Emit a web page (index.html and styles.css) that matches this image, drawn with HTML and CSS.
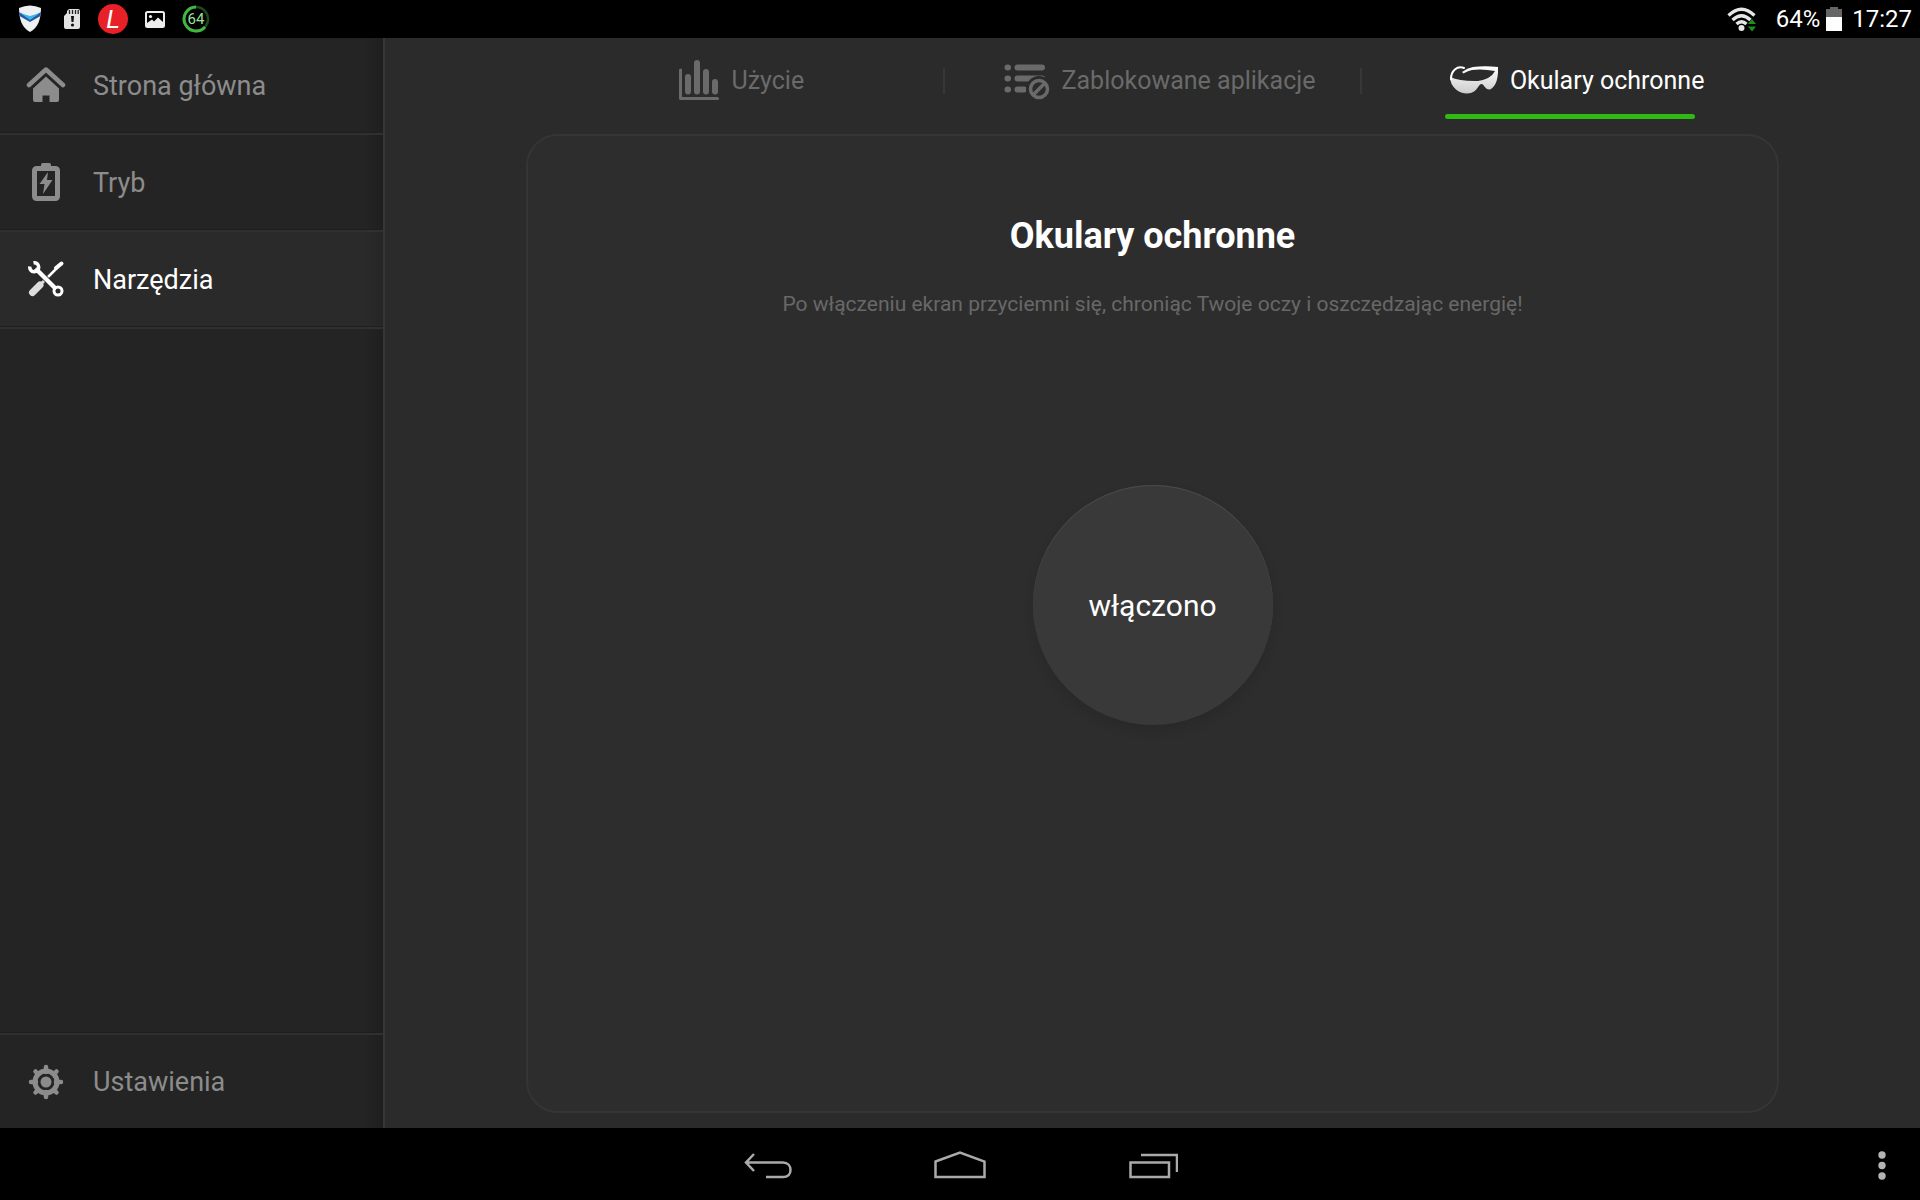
FILE: index.html
```html
<!DOCTYPE html>
<html lang="pl">
<head>
    <meta charset="UTF-8">
    <meta name="viewport" content="width=device-width, initial-scale=1.0">
    <title>Okulary ochronne</title>
    <link rel="stylesheet" href="styles.css">
</head>
<body>
    <header class="status-bar">
        <div class="status-icons">
            <svg width="24" height="28" viewBox="0 0 24 28" aria-hidden="true">
                <path d="M1 3Q12-2 23 3C23 14 20 23 12 27C4 23 1 14 1 3Z" fill="#eef0f2"/>
                <path d="M1 7L12 13L23 7L22.500 11L12 17L1.500 11Z" fill="#2458a0"/>
                <path d="M2 8L12 11L22 8L12 15Z" fill="#3cb4e8"/>
            </svg>
            <svg width="18" height="22" viewBox="0 0 18 22" aria-hidden="true">
                <path d="M6 1H15Q17 1 17 3V19Q17 21 15 21H3Q1 21 1 19V8L4 5V3Z" fill="#e2e2e2"/>
                <path d="M6.500 2V6M9.500 2V6M12.500 2V6M15.200 2V6" stroke="#222" stroke-width="1.300"/>
                <path d="M8 8H11L10.500 14H8.500Z" fill="#111"/>
                <circle cx="9.500" cy="17" r="1.600" fill="#111"/>
            </svg>
            <svg width="30" height="30" viewBox="0 0 30 30" aria-hidden="true">
                <circle cx="15" cy="15" r="15" fill="#e82027"/>
                <text class="logo-letter" x="15" y="24" text-anchor="middle">L</text>
            </svg>
            <svg width="20" height="17" viewBox="0 0 20 17" aria-hidden="true">
                <rect x="1" y="1" width="18" height="15" rx="1.500" fill="none" stroke="#ededed" stroke-width="2"/>
                <path d="M2 15V12L7 8.500L9 10.500L13 6.500L18 11V15Z" fill="#ededed"/>
                <circle cx="5.500" cy="5.500" r="1.600" fill="#ededed"/>
            </svg>
            <svg width="28" height="28" viewBox="0 0 28 28" aria-hidden="true">
                <circle cx="14" cy="14" r="12" fill="none" stroke="#1d4a1c" stroke-width="2.500"/>
                <path d="M14 2A12 12 0 1 0 23 22" fill="none" stroke="#43b83e" stroke-width="3"/>
                <text class="ring-text" x="14" y="19" text-anchor="middle">64</text>
            </svg>
        </div>
        <div class="status-info">
            <svg class="wifi" width="30" height="25" viewBox="0 0 30 25" aria-hidden="true">
                <g fill="none" stroke="#e6e6e6" stroke-width="3.300">
                    <path d="M1.500 8.500Q14.500-4 27.500 8.500"/>
                    <path d="M5.500 13Q14.500 4.500 23.500 13"/>
                    <path d="M9.500 17Q14.500 12.500 19.500 17"/>
                </g>
                <circle cx="14.500" cy="21" r="3" fill="#e6e6e6"/>
                <path d="M25 12L29 17H21ZM21 19.500H29L25 24.500Z" fill="#1f8f1c"/>
            </svg>
            <span>64%</span>
            <svg class="battery" width="16" height="24" viewBox="0 0 16 24" aria-hidden="true">
                <path d="M0 2H4V0H12V2H16V10H0Z" fill="#666"/>
                <path d="M0 10H16V24H0Z" fill="#fff"/>
            </svg>
            <span>17:27</span>
        </div>
    </header>

    <div class="app">
        <nav class="sidebar">
            <a class="side-item" href="#">
                <svg width="40" height="40" viewBox="0 2 40 40" aria-hidden="true">
                    <path d="M3 21L20 5.500L37 21" fill="none" stroke="currentColor" stroke-width="4.500" stroke-linecap="round" stroke-linejoin="round"/>
                    <path d="M20 12.500L33 24.500V36Q33 38 31 38H23.500V31.500H16.500V38H9Q7 38 7 36V24.500Z" fill="currentColor"/>
                </svg>
                Strona główna
            </a>
            <a class="side-item" href="#">
                <svg width="40" height="40" viewBox="0 1 40 40" aria-hidden="true">
                    <path d="M15 4V3Q15 1 17 1H23Q25 1 25 3V4Z" fill="currentColor"/>
                    <rect x="8.500" y="6.500" width="23" height="30" rx="2" fill="none" stroke="currentColor" stroke-width="5"/>
                    <path d="M22 10L13.500 22H18.500L17 32L26.500 18H21Z" fill="currentColor"/>
                </svg>
                Tryb
            </a>
            <a class="side-item active" href="#">
                <svg width="40" height="40" viewBox="0 1 40 40" aria-hidden="true">
                    <path d="M20 20L33 7" stroke="currentColor" stroke-width="2.500"/>
                    <path d="M30 9L35.500 4.500" stroke="currentColor" stroke-width="4" stroke-linecap="round"/>
                    <path d="M14 26L6.500 33.500" stroke="#ddd" stroke-width="7" stroke-linecap="round"/>
                    <path d="M20 20L13 27" stroke="#ddd" stroke-width="3"/>
                    <path d="M10 10L30 30" stroke="#2a2a2a" stroke-width="6"/>
                    <path d="M9.500 9.500L29 29" stroke="currentColor" stroke-width="4.500"/>
                    <path d="M7.500 3.800A4.500 4.500 0 1 1 3.800 7.500" fill="none" stroke="currentColor" stroke-width="3.500"/>
                    <circle cx="32" cy="32" r="4" fill="none" stroke="currentColor" stroke-width="3"/>
                </svg>
                Narzędzia
            </a>
            <a class="side-item settings" href="#">
                <svg width="40" height="40" viewBox="0 0 40 40" aria-hidden="true">
                    <circle cx="20" cy="20" r="11" fill="none" stroke="currentColor" stroke-width="5"/>
                    <path d="M20 5V10M20 30V35M5 20H10M30 20H35M9.500 9.500L12 12M28 28L30.500 30.500M9.500 30.500L12 28M28 12L30.500 9.500" stroke="currentColor" stroke-width="4.500" stroke-linecap="round"/>
                    <circle cx="20" cy="20" r="5.500" fill="currentColor"/>
                </svg>
                Ustawienia
            </a>
        </nav>

        <main class="content">
            <div class="tabs">
                <button class="tab" type="button">
                    <svg width="40" height="40" viewBox="0 2 40 40" aria-hidden="true">
                        <path d="M1.500 12V40.500H38.500" fill="none" stroke="currentColor" stroke-width="3" stroke-linecap="round" stroke-linejoin="round"/>
                        <path d="M9 19V33.500M18 5V33.500M27 14V33.500M36 24V33.500" stroke="currentColor" stroke-width="6" stroke-linecap="round"/>
                    </svg>
                    Użycie
                </button>
                <button class="tab" type="button">
                    <svg width="46" height="40" viewBox="0 1 46 40" aria-hidden="true">
                        <g stroke="currentColor" stroke-width="6" stroke-linecap="round">
                            <path d="M3.500 8.500H4M13.500 8.500H38M3.500 19.500H4M13.500 19.500H38M3.500 30.500H4M13.500 30.500H20"/>
                        </g>
                        <circle cx="35" cy="30" r="13" fill="#2b2b2b"/>
                        <circle cx="35" cy="30" r="8.500" fill="none" stroke="currentColor" stroke-width="3.500"/>
                        <path d="M29.500 35.500L40.500 24.500" stroke="currentColor" stroke-width="3.500"/>
                    </svg>
                    Zablokowane aplikacje
                </button>
                <button class="tab active" type="button">
                    <svg width="48" height="28" viewBox="0 0 48 28" aria-hidden="true">
                        <defs>
                            <linearGradient id="lens" x1="0" y1="0" x2="0" y2="1">
                                <stop offset="0" stop-color="#fff"/>
                                <stop offset="1" stop-color="#ccc"/>
                            </linearGradient>
                        </defs>
                        <path d="M0 11Q10 15.500 28 15Q41 13 45 5Q32 2.500 22 4Q17 5 13.500 7.500L12 6Q17 2 23 1Q35-.5 48 1C48.500 12 46 21 40 23.500C35 24 34 18 31.500 18C29 18 28 23 24 25.500C20 28.500 11 28 6 23.500Q0 18 0 11Z" fill="url(#lens)"/>
                        <path d="M1 13C1 5 7-.5 14 2" fill="none" stroke="#fff" stroke-width="2" stroke-linecap="round"/>
                    </svg>
                    Okulary ochronne
                </button>
            </div>

            <section class="panel">
                <h1>Okulary ochronne</h1>
                <p>Po włączeniu ekran przyciemni się, chroniąc Twoje oczy i oszczędzając energię!</p>
                <button class="toggle" type="button">włączono</button>
            </section>
        </main>
    </div>

    <footer class="nav-bar">
        <div></div>
        <div class="nav-keys">
            <button type="button" aria-label="Wstecz">
                <svg width="52" height="32" viewBox="0 0 52 32" aria-hidden="true">
                    <path d="M12 4L4 12.500L12 21M4 12.500H41C46 12.500 48.500 16 48.500 20C48.500 24 46 27 41 27H24" fill="none" stroke="currentColor" stroke-width="2.500"/>
                </svg>
            </button>
            <button type="button" aria-label="Ekran główny">
                <svg width="52" height="32" viewBox="0 0 52 32" aria-hidden="true">
                    <path d="M1.500 11.500L26 2.500L50.500 11.500V27H1.500Z" fill="none" stroke="currentColor" stroke-width="2.500"/>
                </svg>
            </button>
            <button type="button" aria-label="Ostatnie aplikacje">
                <svg width="52" height="32" viewBox="0 0 52 32" aria-hidden="true">
                    <path d="M4.500 12.500H43V27H4.500ZM15 5H51V22" fill="none" stroke="currentColor" stroke-width="2.500"/>
                </svg>
            </button>
        </div>
        <button class="menu-key" type="button" aria-label="Menu">
            <svg width="8" height="30" viewBox="0 0 8 30" aria-hidden="true">
                <g fill="#b4b4b4">
                    <circle cx="4" cy="4" r="3.700"/>
                    <circle cx="4" cy="14.500" r="3.700"/>
                    <circle cx="4" cy="25" r="3.700"/>
                </g>
            </svg>
        </button>
    </footer>
</body>
</html>
```
FILE: styles.css
```css
* {
    margin: 0;
    padding: 0;
    box-sizing: border-box;
}

body {
    font-family: Roboto, "Noto Sans", sans-serif;
    background: #000;
    min-height: 100vh;
    display: flex;
    flex-direction: column;
    color: #fff;
}

svg {
    display: block;
    flex-shrink: 0;
}

button {
    font: inherit;
    color: inherit;
    background: none;
    border: none;
    cursor: pointer;
}

/* Status bar */
.status-bar {
    height: 38px;
    display: flex;
    justify-content: space-between;
    align-items: center;
    padding: 0 8px 0 18px;
}

.status-icons {
    display: flex;
    align-items: center;
    gap: 17px;
}

.status-icons svg:first-child {
    margin-right: 4px;
}

.logo-letter {
    font: italic 26px "Liberation Sans Narrow", Roboto, sans-serif;
    fill: #fff;
}

.ring-text {
    font-size: 15px;
    fill: #9fe09c;
}

.status-info {
    display: flex;
    align-items: center;
    font-size: 24px;
}

.wifi {
    margin-right: 19px;
}

.battery {
    margin: 0 10px 0 6px;
}

/* App */
.app {
    flex: 1;
    display: flex;
    background: #2b2b2b;
}

.sidebar {
    width: 385px;
    display: flex;
    flex-direction: column;
    background: linear-gradient(90deg, transparent 95%, rgba(0, 0, 0, 0.15)), #242424;
    border-right: 2px solid #363636;
}

.side-item {
    height: 97px;
    display: flex;
    align-items: center;
    gap: 27px;
    padding-left: 26px;
    border-bottom: 2px solid #303030;
    box-shadow: inset 0 -1px #1e1e1e;
    color: #8c8c8c;
    font-size: 27px;
    text-decoration: none;
}

.side-item.active {
    background: linear-gradient(90deg, transparent 95%, rgba(0, 0, 0, 0.1)), #2a2a2a;
    color: #fff;
}

.side-item.settings {
    height: 95px;
    margin-top: auto;
    border-top: 2px solid #303030;
    border-bottom: none;
    box-shadow: 0 -1px #1e1e1e;
}

.content {
    flex: 1;
    display: flex;
    flex-direction: column;
    padding: 0 141px 15px;
}

.tabs {
    height: 96px;
    display: grid;
    grid-template-columns: repeat(3, 1fr);
}

.tab {
    position: relative;
    display: flex;
    justify-content: center;
    align-items: center;
    gap: 12px;
    padding: 0 0 12px 14px;
    color: #6a6a6a;
    font-size: 25px;
}

.tab + .tab::before {
    content: "";
    position: absolute;
    left: -1px;
    top: 30px;
    width: 2px;
    height: 26px;
    background: #373737;
}

.tab.active {
    color: #fff;
}

.tab.active::after {
    content: "";
    position: absolute;
    left: 20%;
    right: 20%;
    bottom: 15px;
    height: 5px;
    border-radius: 3px;
    background: #2fb912;
}

.panel {
    flex: 1;
    display: flex;
    flex-direction: column;
    align-items: center;
    padding: 78px 40px 40px;
    background: #2d2d2d;
    border: 2px solid #353535;
    border-radius: 32px;
}

.panel h1 {
    font-size: 36px;
    line-height: 44px;
    font-weight: 700;
}

.panel p {
    margin-top: 32px;
    color: #686868;
    font-size: 21px;
    line-height: 28px;
}

.toggle {
    width: 240px;
    height: 240px;
    margin-top: 167px;
    border-radius: 50%;
    background: #393939;
    box-shadow: inset 0 1px 1px #4c4c4c, 0 6px 12px rgba(0, 0, 0, 0.1);
    font-size: 30px;
}

/* System navigation */
.nav-bar {
    height: 72px;
    display: grid;
    grid-template-columns: 1fr auto 1fr;
    align-items: center;
    padding-top: 4px;
    color: #aaa;
}

.nav-keys {
    display: flex;
}

.nav-keys button {
    width: 192px;
    height: 68px;
    display: flex;
    justify-content: center;
    align-items: center;
}

.menu-key {
    justify-self: end;
    padding: 19px 34px;
}
```
